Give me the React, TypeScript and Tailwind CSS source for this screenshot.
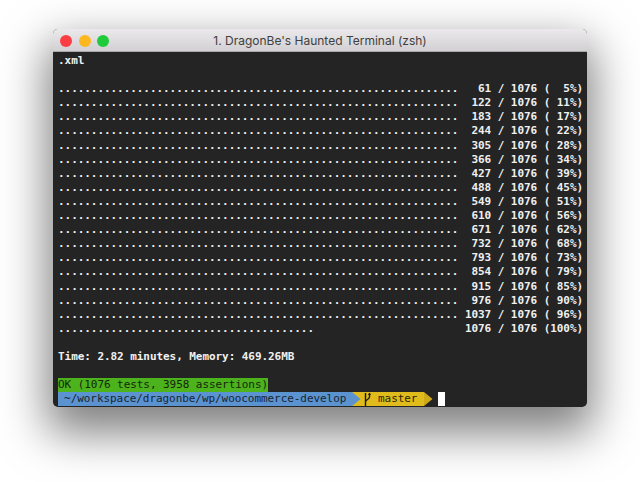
const mono = "font-['DejaVu_Sans_Mono',monospace]";

const rows: [number, string][] = [
  [61, "   61 / 1076 (  5%)"],
  [61, "  122 / 1076 ( 11%)"],
  [61, "  183 / 1076 ( 17%)"],
  [61, "  244 / 1076 ( 22%)"],
  [61, "  305 / 1076 ( 28%)"],
  [61, "  366 / 1076 ( 34%)"],
  [61, "  427 / 1076 ( 39%)"],
  [61, "  488 / 1076 ( 45%)"],
  [61, "  549 / 1076 ( 51%)"],
  [61, "  610 / 1076 ( 56%)"],
  [61, "  671 / 1076 ( 62%)"],
  [61, "  732 / 1076 ( 68%)"],
  [61, "  793 / 1076 ( 73%)"],
  [61, "  854 / 1076 ( 79%)"],
  [61, "  915 / 1076 ( 85%)"],
  [61, "  976 / 1076 ( 90%)"],
  [61, " 1037 / 1076 ( 96%)"],
  [39, " 1076 / 1076 (100%)"],
];

function Line({ children }: { children?: React.ReactNode }) {
  return <div className="h-[14.1px] leading-[14.1px] whitespace-pre">{children}</div>;
}

function Light({ color }: { color: string }) {
  return <span className={`size-3 rounded-full ${color}`} />;
}

export default function App() {
  return (
    <div className="w-[640px] h-[482px] bg-white overflow-hidden pt-[29px] pl-[53px]">
      <div className="w-[534px] h-[378px] rounded-[5px] overflow-hidden flex flex-col bg-[#242424] shadow-[0_20px_45px_6px_rgba(0,0,0,0.5)]">
        <div className="h-[23px] shrink-0 flex items-center relative pt-[1px] bg-gradient-to-b from-[#ebe9eb] to-[#d2d0d2] border-b border-[#a9a9a9]">
          <div className="flex items-center gap-[6.5px] pl-[7px]">
            <Light color="bg-[#fc3d44]" />
            <Light color="bg-[#fdb71f]" />
            <Light color="bg-[#1fcb3c]" />
          </div>
          <div className="absolute inset-0 pt-[2px] flex items-center justify-center text-[12px] text-[#404040] font-['Inter',sans-serif]">
            1. DragonBe's Haunted Terminal (zsh)
          </div>
        </div>
        <div className={`flex-1 pl-[5px] pt-[2px] text-[11px] tracking-[-0.06px] font-semibold text-[#f0f0f0] ${mono}`}>
          <Line>.xml</Line>
          <Line />
          {rows.map(([dots, tail]) => (
            <Line key={tail}>{".".repeat(dots) + " ".repeat(61 - dots) + tail}</Line>
          ))}
          <Line />
          <Line>Time: 2.82 minutes, Memory: 469.26MB</Line>
          <Line />
          <Line>
            <span className="inline-block h-[14px] bg-[#4cb31c] text-[#17260f] font-normal">
              OK (1076 tests, 3958 assertions)
            </span>
          </Line>
          <div className="h-[14px] leading-[14px] whitespace-pre flex items-stretch font-normal text-[#1b2530]">
            <span className="bg-[#5a93cf] w-[294.5px] -ml-[0.5px]"> ~/workspace/dragonbe/wp/woocommerce-develop</span>
            <div className="relative w-[72px] bg-[#dfbb1c] flex text-[#2a2408]">
              <svg width="9" height="14" viewBox="0 0 9 14" className="shrink-0">
                <path d="M0 0 L8.5 7 L0 14 Z" fill="#5a93cf" />
              </svg>
              <svg width="10" height="14" viewBox="0 0 10 14" className="shrink-0 ml-[2px]">
                <path d="M2.5 14 V1 M6.5 1 V5 C6.5 7.5 2.5 7.5 2.5 10" fill="none" stroke="#1a1a12" strokeWidth="1.4" />
                <path d="M5 3 L6.5 0.8 L8 3 Z" fill="#1a1a12" />
              </svg>
              <span className="pl-[5px]">master</span>
            </div>
            <svg width="9" height="14" viewBox="0 0 9 14" className="shrink-0">
              <path d="M0 0 L8.5 7 L0 14 Z" fill="#cfa91a" />
            </svg>
            <span className="w-[7px] ml-[4.5px] bg-white" />
          </div>
        </div>
      </div>
    </div>
  );
}
